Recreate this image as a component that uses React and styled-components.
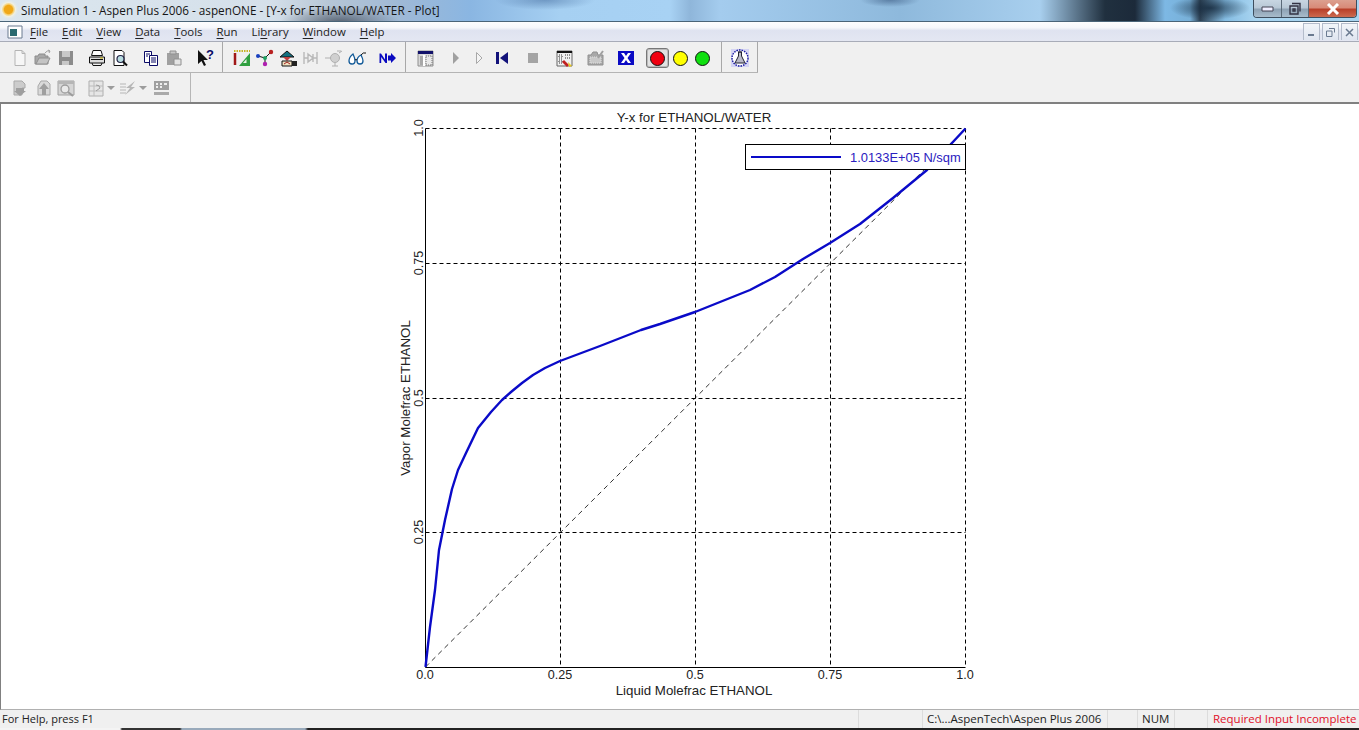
import React from 'react';
import styled, { createGlobalStyle } from 'styled-components';

const GlobalStyle = createGlobalStyle`
    html, body { margin:0; padding:0; background:#f0f0f0; overflow:hidden; }
    #root { width:1359px; height:730px; }
`

const Window = styled.div`
    width:1359px;
    height:730px;
    display:flex;
    flex-direction:column;
    font-family:"Open Sans", "Noto Sans", sans-serif;
    color:#1a1a1a;
    overflow:hidden;
`

const TitleBar = styled.div`
    height:21px;
    flex:none;
    display:flex;
    align-items:flex-start;
    border-bottom:1px solid #4a6478;
    background:
        radial-gradient(ellipse 60px 16px at 340px 22px, rgba(60,70,85,.75), transparent),
        radial-gradient(ellipse 50px 10px at 545px 0px, rgba(70,110,160,.55), transparent),
        radial-gradient(ellipse 40px 12px at 1210px 8px, rgba(20,40,60,.8), transparent),
        radial-gradient(ellipse 30px 7px at 890px 0px, rgba(50,80,120,.55), transparent),
        linear-gradient(90deg, #dbe6ee 0, #d5e0ea 270px, #b6c6d6 330px, #9fb9d6 400px, #8ab6e2 470px, #a6d0f2 560px, #a8d2f4 670px, #8fb6da 690px, #a4ccee 720px, #8eb9dc 900px, #a8cfee 1040px, #20303f 1105px, #1c2a3a 1135px, #7db8e4 1165px, #78b0d8 1190px, #2d4052 1200px, #84bce2 1225px, #a8d4f0 1255px);
`

const AppLogo = styled.span`
    width:13px;
    height:13px;
    margin:3px 0 0 2px;
    flex:none;
    border-radius:50%;
    background:radial-gradient(circle, #f0a818 0 45%, #f6d98a 60%, #fff4cc 100%);
    box-shadow:0 0 3px 1px #fff6d8;
`

const TitleText = styled.span`
    margin:1px 0 0 6px;
    font-size:11.75px;
    line-height:18px;
    white-space:nowrap;
    color:#161616;
`

const CaptionButtons = styled.div`
    margin-left:auto;
    margin-right:2px;
    display:flex;
    height:17px;
    border:1px solid #3e4e5e;
    border-top:none;
    border-radius:0 0 4px 4px;
    overflow:hidden;
`

const CaptionButton = styled.div`
    width:${props => props.$w}px;
    display:flex;
    align-items:center;
    justify-content:center;
    border-right:${props => props.$last ? 'none' : '1px solid #5a6a78'};
    background:${props => props.$close
        ? 'linear-gradient(#dca090 0, #d88a78 45%, #b8402a 55%, #cc6a50 100%)'
        : 'linear-gradient(#c8d6e2 0, #b8c8d6 45%, #8ea2b4 55%, #a8bccc 100%)'};
`

const MenuBar = styled.div`
    height:19px;
    flex:none;
    display:flex;
    align-items:center;
    border-bottom:1px solid #a8acb8;
    background:linear-gradient(#fdfdfe 0, #f6f7fb 30%, #dfe3f0 45%, #e4e7f2 100%);
`

const MdiIcon = styled.div`
    width:16px;
    height:14px;
    margin:0 7px 0 7px;
    flex:none;
    display:flex;
`

const MenuList = styled.div`
    display:flex;
    gap:14px;
`

const MenuItem = styled.span`
    font-size:11.4px;
    line-height:18px;
    color:#222;
    u { text-decoration-thickness:1px; text-underline-offset:2px; }
`

const MdiButtons = styled.div`
    margin-left:auto;
    margin-right:1px;
    display:flex;
    gap:2px;
    height:17px;
`

const MdiButton = styled.div`
    width:17px;
    display:flex;
    align-items:center;
    justify-content:center;
    border:1px solid #b4bccb;
    border-bottom:none;
    box-sizing:border-box;
    background:linear-gradient(#f2f5f9, #dfe5f0);
`

const ToolRow = styled.div`
    height:${props => props.$h}px;
    flex:none;
    display:flex;
    background:#f0f0f0;
`

const ToolStrip = styled.div`
    display:flex;
    height:100%;
    border-bottom:${props => props.$line ? '1px solid #b4b4b4' : 'none'};
    box-sizing:border-box;
    opacity:${props => props.$faded ? 0.8 : 1};
`

const ToolGroup = styled.div`
    width:${props => props.$w}px;
    padding:${props => props.$top}px 0 0 ${props => props.$pad}px;
    box-sizing:border-box;
    display:flex;
    align-items:flex-start;
    border-right:1px solid #a8a8a8;
`

const ToolSlot = styled.div`
    width:${props => props.$w || 23}px;
    height:20px;
    margin-left:${props => props.$ml || 0}px;
    flex:none;
    display:flex;
    align-items:center;
    justify-content:center;
`

const Lamp = styled.span`
    width:15px;
    height:15px;
    box-sizing:border-box;
    border-radius:50%;
    border:1px solid #111;
    background:${props => props.$color};
`

const PressedSlot = styled(ToolSlot)`
    box-sizing:border-box;
    border:1px solid #777;
    border-radius:3px;
    background:#e2e2e2;
    box-shadow:inset 0 0 0 1px #bbb;
`

const Workspace = styled.div`
    flex:1;
    min-height:0;
    display:flex;
    background:#fff;
    border-top:2px solid #808080;
    border-left:1px solid #808080;
    border-bottom:1px solid #b0b0b0;
    padding-left:374px;
`

const ChartSvg = styled.svg`
    display:block;
    text {
        font-family:"Liberation Sans", Arial, sans-serif;
        font-size:13.3px;
        fill:#222;
    }
    text.legend { fill:#2a20c0; font-size:12.9px; }
    text.tick { font-size:12.6px; }
`

const StatusBar = styled.div`
    height:18px;
    flex:none;
    display:flex;
    line-height:18px;
    background:#f0f0f0;
`

const StatusCell = styled.div`
    width:${props => props.$w}px;
    flex:${props => props.$grow ? 1 : 'none'};
    padding-left:${props => props.$pad || 0}px;
    box-sizing:border-box;
    white-space:nowrap;
    overflow:hidden;
    font-size:${props => props.$size || 11.5}px;
    color:${props => props.$red ? '#e0102a' : '#222'};
    border-right:${props => props.$last ? 'none' : '1px solid #dcdcdc'};
`

const BottomEdge = styled.div`
    height:2px;
    flex:none;
    background:linear-gradient(90deg, #f4f4f4 0, #f4f4f4 120px, #333 122px, #333 180px, #9ab 182px, #9ab 305px, #222 308px, #222 1359px);
`

const Icon = ({ children }) => (
    <svg width="20" height="20" viewBox="0 0 20 20">{children}</svg>
)

const icons = {
    newDoc: <path d="M5 2.5h7l3 3v12H5z M12 2.5v3h3" fill="#f6f6f6" stroke="#b4b4b4" />,
    open: <><path d="M2 8h3l1-2h6v2h3v8H2z" fill="#a8a8a8" stroke="#8c8c8c" /><path d="M3 16l3-6h11l-3 6z" fill="#c4c4c4" stroke="#909090" /><path d="M12 5q2-3 5-2M17 3l-2-1M17 3l-1 2" fill="none" stroke="#a0a0a0" /></>,
    save: <><path d="M3 3h14v14H3z" fill="#8c8c8c" /><path d="M6 3h8v6H6z" fill="#c8c8c8" /><path d="M6 13h7v4H6z" fill="#c8c8c8" /></>,
    print: <><path d="M6 2.5h8l1.5 5h-11z" fill="#fff" stroke="#111" /><path d="M2.5 9h15v6h-15z" fill="#ddd" stroke="#111" /><path d="M4 11.5h12M5 15l1 2.5h8l1-2.5" fill="none" stroke="#111" /><path d="M13 10h3" stroke="#c8b400" /></>,
    preview: <><path d="M4 2.5h8l2 2v13H4z" fill="#fff" stroke="#111" /><circle cx="10.5" cy="11" r="3.5" fill="#b8dce0" stroke="#224" strokeWidth="1.2" /><path d="M13 13.5l4 4" stroke="#111" strokeWidth="2" /></>,
    copy: <><path d="M3.5 3.5h7v11h-7z" fill="#fff" stroke="#0a0a66" /><path d="M8.5 7.5h8v10h-8z" fill="#fff" stroke="#0a0a66" /><path d="M5 6h4M5 8h2M10 10h5M10 12h5M10 14h5" stroke="#0a0a66" /></>,
    paste: <><path d="M3 5h12v12H3z" fill="#a0a0a0" /><path d="M6 3h6v3H6z" fill="#c8c8c8" stroke="#909090" /><path d="M10 11h7v6h-7z" fill="#e4e4e4" stroke="#909090" /></>,
    help: <><path d="M3 2v14l3.5-3 2.5 5 2-1-2.5-5H13z" fill="#111" /><text x="11" y="11" style={{ fontSize: 13, fontWeight: 700, fill: '#0a0a66', fontFamily: 'Liberation Sans, sans-serif' }}>?</text></>,
    sheet: <><path d="M2 3h16" stroke="#c8b428" strokeWidth="2" strokeDasharray="1.5 1" /><path d="M3 5v12" stroke="#a01818" strokeWidth="2.5" /><path d="M18 5v13H7z" fill="#30a040" /><path d="M14.5 11v4h-3.5z" fill="#e8f4e8" /></>,
    nodes: <><path d="M3 8l7 2 6-6M10 10v6" stroke="#111" fill="none" /><circle cx="16" cy="4" r="2.2" fill="#b82020" /><circle cx="3" cy="8" r="2" fill="#1840c0" /><circle cx="10" cy="10" r="2" fill="#20a060" /><circle cx="10" cy="16" r="2.2" fill="#b020b0" /></>,
    house: <><path d="M2 9l7-6 7 6z" fill="#147080" stroke="#111" /><path d="M5 9l4 4 4-4z" fill="#c04040" /><path d="M4 13h10v5H4z" fill="#f0e0c0" stroke="#111" /><path d="M6 16l3-2 3 2" stroke="#a02020" fill="none" /><path d="M14 13h5v5h-5z" fill="#222" /></>,
    reactor: <><path d="M3 4v12M16 4v12M3 10h4M12 10h4M7 6l5 4-5 4zM12 6v8" fill="none" stroke="#b8b8b8" strokeWidth="1.4" /></>,
    pump: <><circle cx="11" cy="10" r="4.5" fill="#d0d0d0" stroke="#b0b0b0" /><path d="M1 10h6M15 5l3-2M11 15v3M8 18h6M13 3h4" stroke="#b0b0b0" fill="none" /></>,
    glasses: <><path d="M2 13a3 3 0 1 0 6 0q0-3-2-7q-4 3-4 7zM10 13a3 3 0 1 0 6 0q0-2-2-6q-4 2-4 6z" fill="#fff" stroke="#125a98" strokeWidth="1.3" /><path d="M8 12q1-1 2 0M14 7q2-3 5-2" stroke="#111" fill="none" /></>,
    next: <><path d="M2.5 15V5.5h1.5l4 6v-6H10V15H8.5l-4.3-6v6z" fill="#0a0ac0" /><path d="M11 7.5h3V5l5 5-5 5v-2.5h-3z" fill="#0a0ac0" /></>,
    input: <><path d="M3 3h15v15H3z" fill="#d8d8d8" stroke="#909090" /><path d="M3 3h15v3H3z" fill="#12126a" /><path d="M9 7v11" stroke="#fff" strokeWidth="2" /><path d="M5 8h3v9H5z" fill="#a8a8a8" /><path d="M11 8h6v9h-6z" fill="#e8e8e8" stroke="#777" strokeDasharray="1 1" /></>,
    playFill: <path d="M7 4l6 6-6 6z" fill="#a0a0a0" />,
    playLine: <path d="M7.5 4.5l5.5 5.5-5.5 5.5z" fill="#f4f4f4" stroke="#a8a8a8" />,
    rewind: <><path d="M4 4h3v12H4z" fill="#12127a" /><path d="M16 4v12l-8-6z" fill="#12127a" /></>,
    stop: <path d="M5 5h10v10H5z" fill="#a4a4a4" />,
    check: <><path d="M3 3h15v15H3z" fill="#f0f0f0" stroke="#666" /><path d="M3 3h15v2H3z" fill="#111" /><path d="M5 7h3v3H5zM5 12h3v3H5zM11 7h5M11 10h5" stroke="#333" fill="none" strokeDasharray="1 1" /><path d="M10 12l5 5-2 2-5-5z" fill="#c02020" /><path d="M14 14l4 4-3 1z" fill="#e8c820" /></>,
    folderX: <><path d="M3 7h3l2-3h4l1 3h5v10H3z" fill="#a8a8a8" stroke="#909090" /><path d="M5 9h11v6H5z" fill="#c8c8c8" stroke="#e0e0e0" strokeDasharray="1 1" /><path d="M13 10l5-7" stroke="#a0a0a0" strokeWidth="2" /></>,
    cross: <><path d="M2 3h16v14H2z" fill="#0a0ac4" /><path d="M5 5h3l2 3 2-3h3l-3.500 5 3.500 5h-3l-2-3-2 3H5l3.500-5z" fill="#fff" /></>,
    flask: <><path d="M1 1h18v18H1z" fill="#d4d4f4" /><circle cx="10" cy="10" r="8" fill="#fff" stroke="#1a1aa0" strokeWidth="1.4" strokeDasharray="1.600 1" /><path d="M8 4h4M8.500 4v4l-3.500 7h10l-3.500-7V4z" fill="#b8b8c8" stroke="#223" /></>,
    stepIn: <><path d="M4 3h8l3 3v4h-3v7H4z" fill="#c4c4c4" stroke="#989898" /><path d="M6 10h8v3h2l-6 5-6-5h2z" fill="#8c8c8c" /></>,
    stepOut: <><path d="M8 3h6l3 3v11H5V8z" fill="#d4d4d4" stroke="#989898" /><path d="M6 11l5-6 5 6h-3v6H9v-6z" fill="#8c8c8c" /></>,
    zoomFit: <><path d="M2 3h16v14H2z" fill="#d0d0d0" stroke="#909090" /><path d="M2 3h16v3H2z" fill="#a8a8a8" /><circle cx="9" cy="11" r="4" fill="#e8e8e8" stroke="#888" strokeWidth="1.300" /><path d="M12 14l5 4" stroke="#888" strokeWidth="2" /></>,
    table: <><path d="M2 3h14v15H2z" fill="#e4e4e4" stroke="#a0a0a0" /><path d="M2 8h14M2 13h14M7 3v15" stroke="#b0b0b0" /><path d="M9 7q4 0 4 3l-4 3" fill="none" stroke="#888" /></>,
    flowLines: <><path d="M1 6h6M1 9h6M1 12h6M1 15h6" stroke="#a8a8a8" /><path d="M16 3l-9 7h4l-5 7 10-8h-4z" fill="#a8a8a8" /></>,
    results: <><path d="M3 3h15v9H3z" fill="#8c8c8c" /><path d="M5 5h2v2H5zM9 5h2v2H9zM13 5h3v2h-3zM5 8h2v2H5zM9 8h2v2H9z" fill="#eee" /><path d="M3 14h15v3H3z" fill="#989898" /></>,
}

const Tool = ({ name, ml, w }) => (
    <ToolSlot $ml={ml} $w={w}><Icon>{icons[name]}</Icon></ToolSlot>
)

const Dropdown = ({ name }) => (
    <ToolSlot $w={32}>
        <Icon>{icons[name]}</Icon>
        <svg width="9" height="5" viewBox="0 0 9 5"><path d="M0 0h8l-4 4z" fill="#888" /></svg>
    </ToolSlot>
)

const menus = [
    ['', 'F', 'ile'], ['', 'E', 'dit'], ['', 'V', 'iew'], ['', 'D', 'ata'], ['', 'T', 'ools'],
    ['', 'R', 'un'], ['Li', 'b', 'rary'], ['', 'W', 'indow'], ['', 'H', 'elp'],
]

const X0 = 425.5, X1 = 965.5, Y0 = 667, Y1 = 128.5
const GRID_X = [560.5, 695.5, 830.5]
const GRID_Y = [263.5, 398.5, 532.5]

// read off the plot in page pixels
const curve = [
    [425.5, 667], [430, 627], [435, 590], [439, 550], [445, 520], [452, 489], [458, 470], [466, 453],
    [478, 428], [491, 412], [502, 400], [511, 392], [522, 383], [533, 375], [545, 368], [560, 361],
    [600, 346], [641, 330], [660, 324], [695, 312], [750, 290], [775, 277], [803, 259], [830, 243],
    [860, 224], [893, 198], [927, 170], [952, 143], [965.5, 128.5],
]

const xTicks = [[425, '0.0'], [560, '0.25'], [695, '0.5'], [830, '0.75'], [965, '1.0']]
const yTicks = [[128, '1.0'], [263, '0.75'], [398, '0.5'], [532, '0.25']]

const Plot = () => (
    <ChartSvg width="640" height="605" viewBox="375 104 640 605">
        <text x="694" y="122" textAnchor="middle">Y-x for ETHANOL/WATER</text>
        {GRID_X.concat(X1).map(x => (
            <line key={x} x1={x} x2={x} y1={Y1} y2={Y0} stroke="#000" strokeDasharray="4 3" />
        ))}
        {GRID_Y.concat(Y1).map(y => (
            <line key={y} x1={X0} x2={X1} y1={y} y2={y} stroke="#000" strokeDasharray="4 3" />
        ))}
        <line x1={X0} x2={X1} y1={Y0} y2={Y1} stroke="#000" strokeWidth="0.8" strokeDasharray="5 4" />
        <path d={`M${X0} ${Y1}V${Y0 + 0.5}H${X1}`} fill="none" stroke="#000" />
        <polyline points={curve.map(p => p.join(',')).join(' ')} fill="none" stroke="#0a0ac8" strokeWidth="2.4" strokeLinejoin="round" />
        <rect x="745.5" y="144.5" width="220" height="25" fill="#fff" stroke="#000" />
        <line x1="751" x2="841" y1="157" y2="157" stroke="#0a0ac8" strokeWidth="2" />
        <text className="legend" x="850" y="162">1.0133E+05 N/sqm</text>
        {xTicks.map(([x, label]) => (
            <text className="tick" key={x} x={x} y="679" textAnchor="middle">{label}</text>
        ))}
        {yTicks.map(([y, label]) => (
            <text className="tick" key={y} transform={`translate(423 ${y}) rotate(-90)`} textAnchor="middle">{label}</text>
        ))}
        <text transform="translate(410 398) rotate(-90)" textAnchor="middle">Vapor Molefrac ETHANOL</text>
        <text x="694" y="695" textAnchor="middle">Liquid Molefrac ETHANOL</text>
    </ChartSvg>
)

const App = () => (
    <Window>
        <GlobalStyle />
        <TitleBar>
            <AppLogo />
            <TitleText>Simulation 1 - Aspen Plus 2006 - aspenONE - [Y-x for ETHANOL/WATER - Plot]</TitleText>
            <CaptionButtons>
                <CaptionButton $w={27}>
                    <svg width="14" height="8" viewBox="0 0 14 8"><path d="M1 2h11v4H1z" fill="#eef" stroke="#445" /></svg>
                </CaptionButton>
                <CaptionButton $w={26}>
                    <svg width="14" height="14" viewBox="0 0 14 14"><path d="M4 1.500h8v8M2 4h8v8H2z M5 7h2v2H5z" fill="none" stroke="#334" strokeWidth="1.400" /></svg>
                </CaptionButton>
                <CaptionButton $w={47} $close $last>
                    <svg width="14" height="12" viewBox="0 0 14 12"><path d="M2 1l10 10M12 1L2 11" stroke="#fff" strokeWidth="3" /></svg>
                </CaptionButton>
            </CaptionButtons>
        </TitleBar>
        <MenuBar>
            <MdiIcon>
                <svg width="16" height="14" viewBox="0 0 16 14"><path d="M1 1h14v12H1z" fill="#fff" stroke="#6a7a90" /><path d="M3 4h7v7H3z" fill="#2a6a70" /></svg>
            </MdiIcon>
            <MenuList>
                {menus.map(([before, key, after]) => (
                    <MenuItem key={key}>{before}<u>{key}</u>{after}</MenuItem>
                ))}
            </MenuList>
            <MdiButtons>
                <MdiButton><svg width="9" height="9" viewBox="0 0 9 9"><path d="M1 7h6" stroke="#6a7a90" strokeWidth="2" /></svg></MdiButton>
                <MdiButton><svg width="9" height="9" viewBox="0 0 9 9"><path d="M3 .5h5.500v4M.5 3h5.500v5.500H.5z" fill="none" stroke="#6a7a90" /></svg></MdiButton>
                <MdiButton><svg width="9" height="9" viewBox="0 0 9 9"><path d="M1 1l7 7M8 1L1 8" stroke="#6a7a90" strokeWidth="1.500" /></svg></MdiButton>
            </MdiButtons>
        </MenuBar>
        <ToolRow $h={31}>
            <ToolStrip $line>
                <ToolGroup $w={223} $pad={8} $top={6}>
                    <Tool name="newDoc" /><Tool name="open" /><Tool name="save" />
                    <Tool name="print" ml={8} /><Tool name="preview" />
                    <Tool name="copy" ml={8} /><Tool name="paste" />
                    <Tool name="help" ml={8} />
                </ToolGroup>
                <ToolGroup $w={183} $pad={7} $top={6}>
                    <Tool name="sheet" /><Tool name="nodes" /><Tool name="house" />
                    <Tool name="reactor" /><Tool name="pump" /><Tool name="glasses" />
                    <Tool name="next" ml={7} />
                </ToolGroup>
                <ToolGroup $w={316} $pad={7} $top={6}>
                    <Tool name="input" />
                    <Tool name="playFill" ml={8} /><Tool name="playLine" /><Tool name="rewind" />
                    <Tool name="stop" ml={8} /><Tool name="check" ml={8} />
                    <Tool name="folderX" ml={8} /><Tool name="cross" ml={8} />
                    <PressedSlot $ml={9}><Lamp $color="#f00010" /></PressedSlot>
                    <ToolSlot $w={22}><Lamp $color="#ffff00" /></ToolSlot>
                    <ToolSlot $w={22}><Lamp $color="#10e010" /></ToolSlot>
                </ToolGroup>
                <ToolGroup $w={36} $pad={6} $top={6}>
                    <Tool name="flask" />
                </ToolGroup>
            </ToolStrip>
        </ToolRow>
        <ToolRow $h={29}>
            <ToolStrip $faded>
                <ToolGroup $w={191} $pad={8} $top={5}>
                    <Tool name="stepIn" /><Tool name="stepOut" /><Tool name="zoomFit" />
                    <ToolSlot $w={1} $ml={7} />
                    <Dropdown name="table" /><Dropdown name="flowLines" />
                    <Tool name="results" />
                </ToolGroup>
            </ToolStrip>
        </ToolRow>
        <Workspace>
            <Plot />
        </Workspace>
        <StatusBar>
            <StatusCell $w={859} $pad={2} $size={11}>For Help, press F1</StatusCell>
            <StatusCell $w={64} />
            <StatusCell $w={185} $pad={4}>C:\...AspenTech\Aspen Plus 2006</StatusCell>
            <StatusCell $w={30} />
            <StatusCell $w={37} $pad={4}>NUM</StatusCell>
            <StatusCell $w={33} />
            <StatusCell $grow $red $last $pad={5}>Required Input Incomplete</StatusCell>
        </StatusBar>
        <BottomEdge />
    </Window>
)

export default App
